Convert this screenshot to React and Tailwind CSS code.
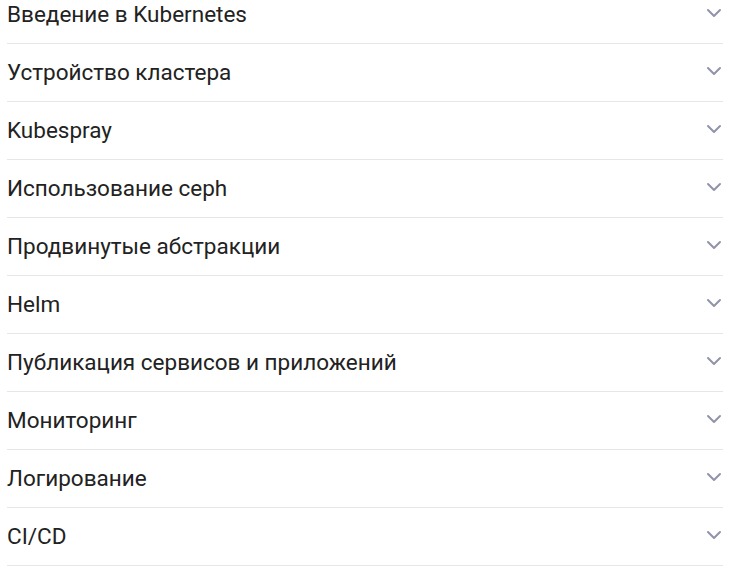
const topics = [
  'Введение в Kubernetes',
  'Устройство кластера',
  'Kubespray',
  'Использование ceph',
  'Продвинутые абстракции',
  'Helm',
  'Публикация сервисов и приложений',
  'Мониторинг',
  'Логирование',
  'CI/CD',
];

const Chevron = () => (
  <svg width="16" height="10" viewBox="0 0 16 10" fill="none" className="mb-[3px]">
    <path
      d="M2 2l6 6 6-6"
      stroke="#9194a8"
      strokeWidth="2"
      strokeLinecap="round"
      strokeLinejoin="round"
    />
  </svg>
);

const App = () => {
  return (
    <div className="h-[576px] w-[737px] overflow-hidden bg-white">
      <div className="-mt-[14px] ml-[7px] w-[716px] font-['Roboto',sans-serif]">
        {topics.map(topic => (
          <div
            key={topic}
            className="flex h-[58px] items-center justify-between border-b border-[#e4e6ea] pr-[1px]"
          >
            <span className="text-[22.5px] leading-none text-[#222]">{topic}</span>
            <Chevron />
          </div>
        ))}
      </div>
    </div>
  );
};

export default App;
